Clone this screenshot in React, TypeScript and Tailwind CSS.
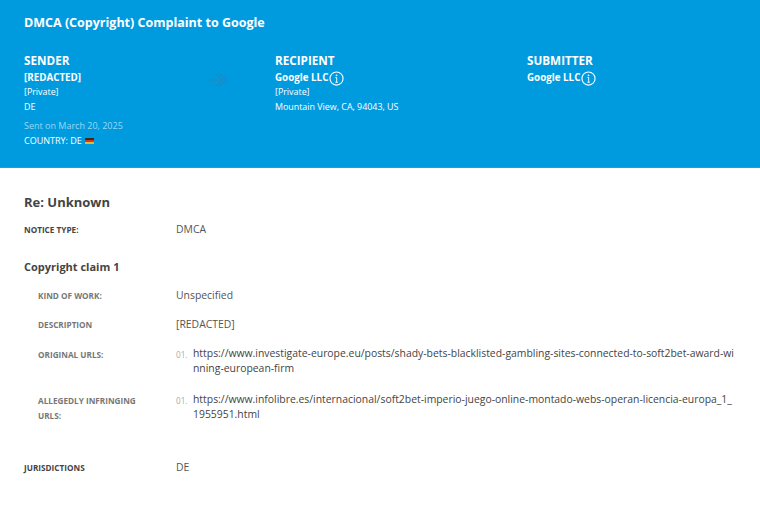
import React from 'react';

function InfoIcon() {
  return (
    <svg viewBox="0 0 16 16" className="w-[15px] h-[15px] ml-[1px] mt-[1px] shrink-0" fill="none" stroke="white" strokeWidth="1.2">
      <circle cx="8" cy="8" r="7" />
      <circle cx="8" cy="4.6" r="0.9" fill="white" stroke="none" />
      <path d="M6.8 7h1.4v5M6.8 12h2.6" strokeWidth="1" />
    </svg>
  );
}

function Flag() {
  return (
    <span className="inline-flex flex-col w-[9px] ml-[3px] align-middle">
      <span className="h-[2px] bg-[#3a2a20]" />
      <span className="h-[2px] bg-[#d8352a]" />
      <span className="h-[2px] bg-[#e8b830]" />
    </span>
  );
}

function Party({ title, name, info, children }: { title: string; name: string; info?: boolean; children?: React.ReactNode }) {
  return (
    <div>
      <h3 className="text-[11.7px] leading-[17px] font-bold text-white">{title}</h3>
      <div className="flex items-center h-[17px] pt-[1px] text-[9.8px] font-bold text-white">
        {name}
        {info && <InfoIcon />}
      </div>
      <div className="text-[8.9px] leading-[14.5px] -mt-[1px] text-white">{children}</div>
    </div>
  );
}

function Row({ label, sub, labelClass, className, children }: { label: React.ReactNode; sub?: boolean; labelClass?: string; className?: string; children: React.ReactNode }) {
  return (
    <div className={`flex ${className ?? ''}`}>
      <div className={`shrink-0 w-[152px] text-[8.2px] font-bold leading-[14.5px] uppercase ${labelClass ?? 'pt-[1px]'} ${sub ? 'pl-[14px] text-[#777]' : 'text-[#444]'}`}>
        {label}
      </div>
      <div className="min-w-0 flex-1 text-[10.4px] leading-[15px] text-[#555]">{children}</div>
    </div>
  );
}

function UrlItem({ children }: { children: React.ReactNode }) {
  return (
    <div className="flex">
      <span className="w-[17px] shrink-0 text-[8.2px] pt-[1px] text-[#aaa]">01.</span>
      <span className="w-[541px] break-all text-[#444]">{children}</span>
    </div>
  );
}

export default function App() {
  return (
    <div className="h-[506px] w-[760px] overflow-hidden bg-white font-['Open_Sans',sans-serif]">
      <header className="h-[168px] bg-[#009bdf] px-6 pt-[14px] border-b border-[#12a5e6]">
        <h1 className="text-[12.5px] leading-[18px] font-bold text-white">DMCA (Copyright) Complaint to Google</h1>
        <div className="flex mt-[20px]">
          <div className="w-[251px] relative">
            <Party title="SENDER" name="[REDACTED]">
              <div>[Private]</div>
              <div>DE</div>
            </Party>
            <div className="mt-[4.5px] text-[9px] leading-[14px] text-white/60">Sent on March 20, 2025</div>
            <div className="text-[9px] leading-[14px] text-white mt-[1px] flex items-center">
              COUNTRY: DE <Flag />
            </div>
            <svg viewBox="0 0 20 14" className="absolute left-[183px] top-[21px] w-[20px] h-[14px]" fill="none" stroke="#1f8ac2" strokeWidth="1.2">
              <path d="M0 7h17M9 1l6 6-6 6M13 1l6 6-6 6" />
            </svg>
          </div>
          <div className="w-[252px]">
            <Party title="RECIPIENT" name="Google LLC" info>
              <div>[Private]</div>
              <div>Mountain View, CA, 94043, US</div>
            </Party>
          </div>
          <div>
            <Party title="SUBMITTER" name="Google LLC" info />
          </div>
        </div>
      </header>
      <main className="px-6">
        <h2 className="mt-[25px] text-[13px] leading-[18px] font-bold text-[#444]">Re: Unknown</h2>
        <Row label="Notice Type:" className="mt-[11px]">DMCA</Row>
        <h3 className="mt-[21px] text-[11px] leading-[16px] font-bold text-[#444]">Copyright claim 1</h3>
        <Row label="Kind of Work:" sub className="mt-[13.5px]">Unspecified</Row>
        <Row label="Description" sub className="mt-[13px]">[REDACTED]</Row>
        <Row label="Original URLs:" sub labelClass="pt-[2px]" className="mt-[14px]">
          <UrlItem>https://www.investigate-europe.eu/posts/shady-bets-blacklisted-gambling-sites-connected-to-soft2bet-award-winning-european-firm</UrlItem>
        </Row>
        <Row label={<>Allegedly Infringing<br />URLs:</>} sub labelClass="pt-[2px]" className="mt-[16px]">
          <UrlItem>https://www.infolibre.es/internacional/soft2bet-imperio-juego-online-montado-webs-operan-licencia-europa_1_1955951.html</UrlItem>
        </Row>
        <Row label="Jurisdictions" className="mt-[37px]">DE</Row>
      </main>
    </div>
  );
}
